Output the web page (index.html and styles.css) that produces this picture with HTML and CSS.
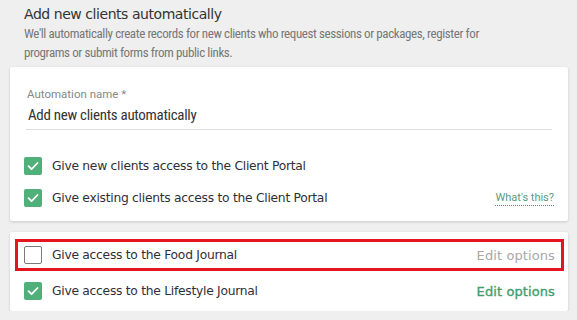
FILE: index.html
```html
<!DOCTYPE html>
<html lang="en">

<head>
    <meta charset="UTF-8">
    <title>Add new clients automatically</title>
    <link rel="stylesheet" href="styles.css">
</head>

<body>
    <div class="page">
        <div class="intro">
            <h1 class="title">Add new clients automatically</h1>
            <p class="desc">We'll automatically create records for new clients who request sessions or packages, register for programs or submit forms from public links.</p>
        </div>

        <div class="card card-main">
            <div class="field">
                <label class="field-label">Automation name *</label>
                <div class="field-value">Add new clients automatically</div>
            </div>
            <div class="row">
                <span class="box checked"><svg viewBox="0 0 18 18"><path d="M4.5 9.2 L7.6 12.2 L13.5 6" /></svg></span>
                <span class="row-text">Give new clients access to the Client Portal</span>
            </div>
            <div class="row">
                <span class="box checked"><svg viewBox="0 0 18 18"><path d="M4.5 9.2 L7.6 12.2 L13.5 6" /></svg></span>
                <span class="row-text">Give existing clients access to the Client Portal</span>
                <a class="help">What's this?</a>
            </div>
        </div>

        <div class="card card-journals">
            <div class="row row-journal highlight">
                <span class="box"></span>
                <span class="row-text">Give access to the Food Journal</span>
                <a class="edit off">Edit options</a>
            </div>
            <div class="row row-journal">
                <span class="box checked"><svg viewBox="0 0 18 18"><path d="M4.5 9.2 L7.6 12.2 L13.5 6" /></svg></span>
                <span class="row-text">Give access to the Lifestyle Journal</span>
                <a class="edit on">Edit options</a>
            </div>
        </div>
    </div>
</body>

</html>
```

FILE: styles.css
```css
* {
    margin: 0;
    padding: 0;
    box-sizing: border-box;
}

body {
    background: #efefef;
    font-family: "DejaVu Sans", sans-serif;
    color: #2f2f38;
}

.page {
    width: 577px;
    padding: 4px 9px 0 10px;
}

.intro {
    padding: 0 14px;
}

.title {
    font-size: 14px;
    font-weight: normal;
    line-height: 20px;
    color: #333;
    letter-spacing: -0.45px;
}

.desc {
    max-width: 480px;
    font-family: "Roboto Condensed", Roboto, sans-serif;
    font-size: 13px;
    line-height: 19px;
    letter-spacing: -0.4px;
    color: #777;
}

.card {
    background: #fff;
    border-radius: 2px;
    box-shadow: 0 1px 3px rgba(0, 0, 0, 0.16);
}

.card-main {
    margin-top: 5px;
    padding: 20px 14px 7px 14px;
}

.field {
    padding: 0 2px;
    margin-bottom: 20px;
}

.field-label {
    display: block;
    font-family: Roboto, sans-serif;
    font-size: 11.5px;
    line-height: 14px;
    color: #888;
    margin-left: 1px;
}

.field-value {
    font-family: "Roboto Condensed", Roboto, sans-serif;
    font-size: 15px;
    line-height: 18px;
    letter-spacing: -0.3px;
    color: #333;
    padding: 5px 0 5px 2px;
    border-bottom: 1px solid #ddd;
}

.row {
    display: flex;
    align-items: center;
    height: 32px;
}

.row-text {
    font-size: 12.3px;
    letter-spacing: -0.27px;
    margin-left: 10px;
    flex: 1;
}

.box {
    width: 18px;
    height: 18px;
    border: 1.5px solid #7a7a7a;
    border-radius: 2px;
    display: flex;
    align-items: center;
    justify-content: center;
}

.box.checked {
    background: #4fb07a;
    border: none;
}

.box svg {
    width: 18px;
    height: 18px;
}

.box svg path {
    fill: none;
    stroke: #fff;
    stroke-width: 1.8;
    stroke-linecap: round;
    stroke-linejoin: round;
}

.help {
    font-family: Roboto, sans-serif;
    font-size: 11px;
    color: #5a9a7c;
    border-bottom: 1.5px dotted #3f9a6a;
    line-height: 15px;
}

.card-journals {
    margin-top: 11px;
    padding: 7px 4px 4px 5px;
}

.row-journal {
    padding: 0 6px 0 6px;
    border: 3px solid transparent;
}

.row-journal + .row-journal {
    margin-top: 4px;
}

.highlight {
    border-color: #e3151f;
}

.edit {
    font-size: 13px;
    letter-spacing: 0.1px;
}

.edit.off {
    color: #a8a8a8;
}

.edit.on {
    color: #3f9e6c;
    -webkit-text-stroke: 0.35px #3f9e6c;
}
```
